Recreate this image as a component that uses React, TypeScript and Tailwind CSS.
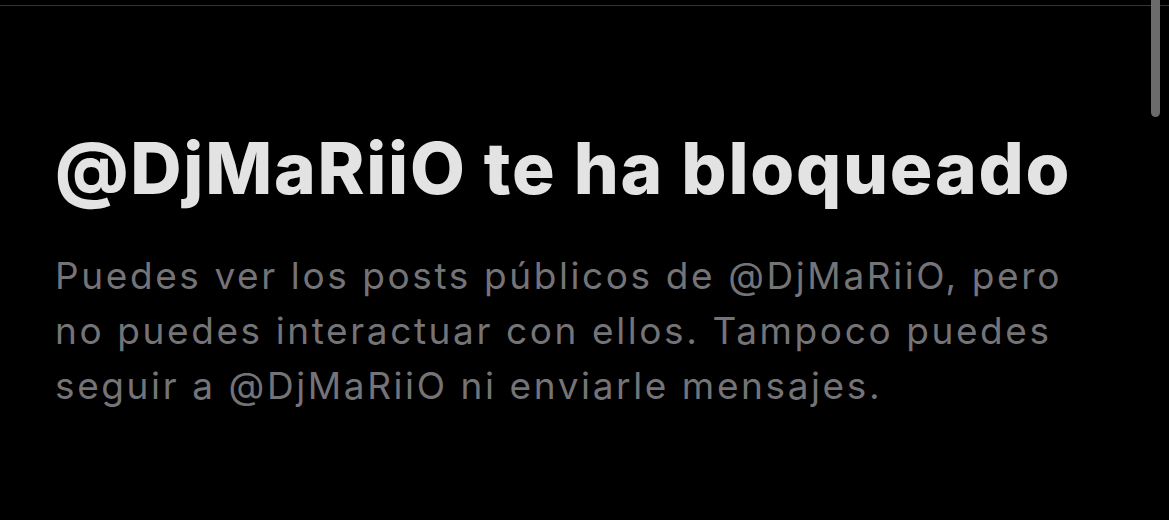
export default function App() {
  return (
    <div className="relative h-[520px] w-[1169px] overflow-hidden bg-black">
      {/* thin divider at the very top */}
      <div className="mt-[5px] h-px w-full bg-[#333639]" />

      <div className="px-[55px] pt-[120px]">
        <h1 className="text-[71px] font-extrabold leading-[84px] tracking-[1.75px] text-[#e3e3e3] [font-family:Inter,'Noto_Sans',sans-serif]">
          @DjMaRiiO te ha bloqueado
        </h1>
        <p className="mt-[38px] text-[37px] leading-[55px] tracking-[2.6px] text-[#747478] [font-family:Inter,'Noto_Sans',sans-serif]">
          <span className="block">Puedes ver los posts públicos de @DjMaRiiO, pero</span>
          <span className="block">no puedes interactuar con ellos. Tampoco puedes</span>
          <span className="block">seguir a @DjMaRiiO ni enviarle mensajes.</span>
        </p>
      </div>

      {/* scrollbar thumb */}
      <div className="absolute right-[9px] top-0 h-[117px] w-[9px] rounded-b-full bg-[#6b6b6b]" />
    </div>
  );
}
